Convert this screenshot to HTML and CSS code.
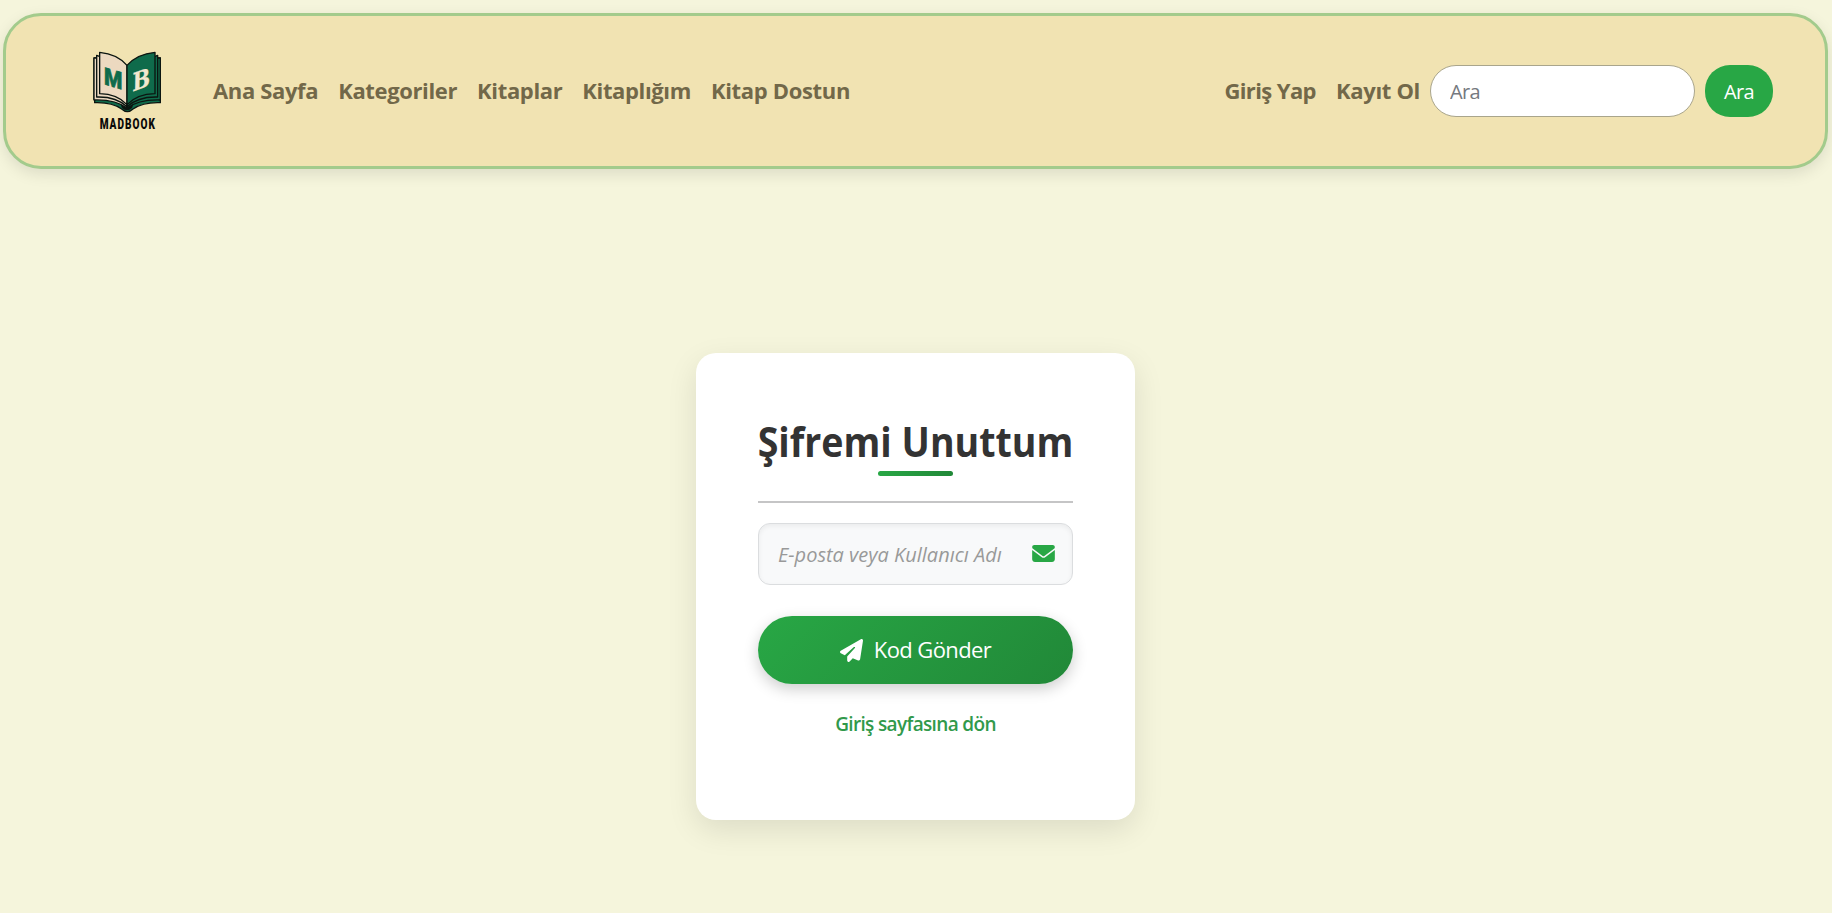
FILE: index.html
```html
<!DOCTYPE html>
<html lang="tr">
<head>
<meta charset="utf-8">
<title>Şifremi Unuttum</title>
<link rel="stylesheet" href="styles.css">
</head>
<body>
<header class="navbar">
  <a class="brand" href="#">
    <svg class="logo" viewBox="0 0 285 300">
      <g stroke="#0b1510" stroke-width="4" stroke-linejoin="round">
        <path fill="#0f6b4b" d="M44 176V188Q95 186 125 207Q142 223 159 207Q190 186 241 188V176Z"/>
        <path fill="#ecd9c0" d="M42 54H60V178H42Z"/>
        <path fill="#0f6b4b" d="M223 54H241V178H223Z"/>
        <path fill="#ecd9c0" d="M42 54V180Q108 178 141 205V180L52 160V54Z"/>
        <path fill="#0f6b4b" d="M241 54V180Q175 178 141 205V180L231 160V54Z"/>
        <path fill="#ecd9c0" d="M50 46V171Q108 169 141 200V80Z"/>
        <path fill="#0f6b4b" d="M233 46V171Q175 169 141 200V80Z"/>
        <path fill="#ecd9c0" d="M59 37Q112 42 141 76V194Q112 162 59 161Z"/>
        <path fill="#0f6b4b" d="M225 37Q171 42 141 76V194Q171 162 225 161Z"/>
      </g>
      <path fill="#0b1510" d="M122 194Q141 207 160 194L156 204Q141 218 126 204Z"/>
      <text class="logo-m" transform="matrix(1 .3 0 1 72 133)" textLength="55" lengthAdjust="spacingAndGlyphs">M</text>
      <text class="logo-b" transform="matrix(1 -.36 -.02 1 157 155)" textLength="53" lengthAdjust="spacingAndGlyphs">B</text>
      <text class="logo-name" transform="matrix(.72 0 0 1 59 267)" textLength="230" lengthAdjust="spacing">MADBOOK</text>
    </svg>
  </a>
  <nav class="links">
    <a class="link" href="#">Ana Sayfa</a>
    <a class="link" href="#">Kategoriler</a>
    <a class="link" href="#">Kitaplar</a>
    <a class="link" href="#">Kitaplığım</a>
    <a class="link link-friend" href="#">Kitap Dostun</a>
  </nav>
  <nav class="links links-user">
    <a class="link link-login" href="#">Giriş Yap</a>
    <a class="link link-signup" href="#">Kayıt Ol</a>
  </nav>
  <form class="search">
    <input class="search-input" type="text" placeholder="Ara">
    <button class="search-button" type="button">Ara</button>
  </form>
</header>
<main class="page">
  <section class="card">
    <h1 class="title"><span class="title-text">Şifremi Unuttum</span></h1>
    <hr class="rule">
    <label class="field">
      <span class="field-text">E-posta veya Kullanıcı Adı</span>
      <svg class="mail" viewBox="0 64 512 384"><path fill="currentColor" d="M48 64C21.500 64 0 85.500 0 112c0 15.100 7.100 29.300 19.200 38.400L236.800 313.600c11.400 8.500 27 8.500 38.400 0L492.800 150.400c12.100-9.100 19.200-23.300 19.200-38.400c0-26.500-21.500-48-48-48H48zM0 176V384c0 35.300 28.700 64 64 64H448c35.300 0 64-28.700 64-64V176L294.400 339.200c-22.800 17.100-54 17.100-76.800 0L0 176z"/></svg>
    </label>
    <button class="send" type="button">
      <svg class="plane" viewBox="0 0 512 512"><path fill="currentColor" d="M498.100 5.600c10.100 7 15.400 19.100 13.500 31.200l-64 416c-1.500 9.700-7.400 18.200-16 23s-18.900 5.400-28 1.600L284 427.700l-68.500 74.100c-8.900 9.700-22.900 12.900-35.200 8.100S160 493.200 160 480V396.400c0-4 1.500-7.800 4.200-10.700L331.800 202.800c5.800-6.300 5.600-16-.4-22s-15.700-6.400-22-.7L106 360.800 17.700 316.600C7.100 311.300 .3 300.700 0 288.900s5.900-22.800 16.100-28.700l448-256c10.700-6.100 23.900-5.500 34 1.400z"/></svg>
      <span>Kod Gönder</span>
    </button>
    <a class="back" href="#">Giriş sayfasına dön</a>
  </section>
</main>
</body>
</html>
```
FILE: styles.css
```css
* { box-sizing: border-box; }

body {
  margin: 0;
  min-height: 913px;
  padding: 13px 4px 0 3px;
  background: #f5f5dc;
  font-family: "Open Sans", "Noto Sans", sans-serif;
  overflow: hidden;
}

a { text-decoration: none; }

.navbar {
  display: flex;
  align-items: center;
  height: 156px;
  padding: 0 52px 0 74px;
  border: 3px solid #a3cb8c;
  border-radius: 38px;
  background: #f1e3b2;
  box-shadow: 0 5px 15px rgba(0, 0, 0, .1);
}

.brand { padding-bottom: 2px; }

.logo {
  display: block;
  width: 95px;
  height: 100px;
}

.logo-m { font: 900 72px Roboto, sans-serif; fill: #0f6b4b; stroke: #0f6b4b; stroke-width: 2; }
.logo-b { font: 700 76px "DejaVu Serif", serif; fill: #f3e8cf; stroke: #f3e8cf; stroke-width: 1; }
.logo-name { font: 900 42px Roboto, sans-serif; fill: #0a0a08; }

.links { display: flex; padding: 0 0 3px 28px; }
.links-user { margin-left: auto; padding-left: 0; }

.link {
  padding: 0 10px;
  color: #726849;
  font-size: 22px;
  font-weight: 700;
  letter-spacing: -.36px;
  line-height: 34px;
  white-space: nowrap;
}

.link-friend { letter-spacing: -.33px; }
.link-login { letter-spacing: -.6px; }
.link-signup { letter-spacing: -.32px; }

.search { display: flex; gap: 10px; }

.search-input {
  width: 265px;
  height: 52px;
  padding: 1px 19px 0;
  border: 1px solid #a9a58c;
  border-radius: 26px;
  background: #fff;
  font: 20px "Open Sans", "Noto Sans", sans-serif;
  letter-spacing: -.6px;
}

.search-input::placeholder { color: #757980; opacity: 1; }

.search-button {
  width: 68px;
  height: 52px;
  padding: 1px 0 0;
  border: 0;
  border-radius: 25px;
  background: #28a745;
  color: #fff;
  font: 20px "Open Sans", "Noto Sans", sans-serif;
  letter-spacing: -.6px;
}

.page { display: flex; justify-content: center; padding-top: 184px; }

.card {
  display: flex;
  flex-direction: column;
  align-items: stretch;
  width: 439px;
  height: 467px;
  padding: 62px;
  border-radius: 20px;
  background: #fff;
  box-shadow: 0 10px 30px rgba(0, 0, 0, .1);
}

.title {
  display: flex;
  flex-direction: column;
  align-items: center;
  height: 61px;
  margin: 0;
  color: #333;
  font-size: 41px;
  font-weight: 700;
  line-height: 52px;
  white-space: nowrap;
}

.title-text { padding-bottom: 4px; transform: scaleX(.915); }

.title::after {
  content: "";
  flex: none;
  width: 75px;
  height: 5px;
  border-radius: 3px;
  background: linear-gradient(90deg, #28a745, #218838);
}

.rule {
  width: 100%;
  height: 2px;
  margin: 25px 0 20px;
  border: 0;
  background: #c5c5c6;
}

.field {
  display: flex;
  align-items: center;
  justify-content: space-between;
  height: 62px;
  padding: 0 17px 0 19px;
  border: 1px solid #dbdddf;
  border-radius: 12px;
  background: #f8f9fa;
  box-shadow: inset 0 2px 5px rgba(0, 0, 0, .06);
}

.field-text {
  color: #999;
  font-size: 20px;
  font-style: italic;
  white-space: nowrap;
}

.mail { width: 23px; height: 17px; margin-bottom: 1px; color: #28a745; }

.send {
  display: flex;
  align-items: center;
  justify-content: center;
  gap: 11px;
  height: 68px;
  margin-top: 31px;
  padding: 0;
  border: 0;
  border-radius: 34px;
  background: linear-gradient(135deg, #28a745, #218838);
  box-shadow: 0 5px 15px rgba(0, 0, 0, .2);
  color: #fff;
  font: 22px "Open Sans", "Noto Sans", sans-serif;
  letter-spacing: -.6px;
}

.send span { padding-bottom: 2px; }

.plane { width: 23px; height: 23px; }

.back {
  margin: 25px auto 0;
  color: #31994b;
  font-size: 19px;
  font-weight: 600;
  letter-spacing: -.66px;
  line-height: 30px;
  white-space: nowrap;
}
```
